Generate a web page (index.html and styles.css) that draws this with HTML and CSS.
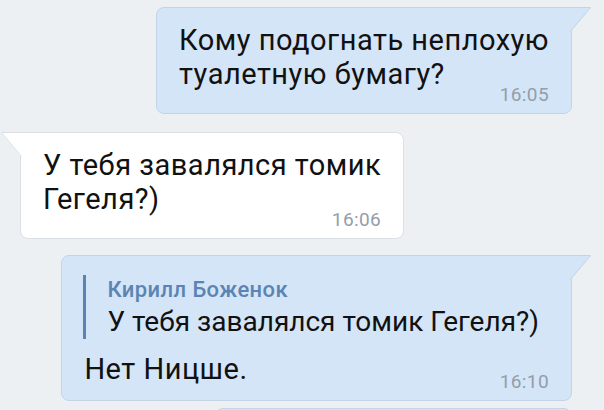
FILE: index.html
```html
<!DOCTYPE html>
<html lang="ru">
  <head>
    <meta charset="UTF-8" />
    <meta name="viewport" content="width=device-width, initial-scale=1.0" />
    <title>Диалог</title>
    <link rel="stylesheet" href="styles.css">
  </head>
  <body>
    <div class="chat">
      <div class="msg out">
        <svg class="tail" viewBox="0 0 22 26">
          <path class="tail-fill" d="M0 0 H21 L1 24.5 V26 H0 Z" />
          <path class="tail-line" d="M0 0.5 H20.5 L0.5 24.5" />
        </svg>
        <p class="text">Кому подогнать неплохую<br>туалетную бумагу?</p>
        <span class="time">16:05</span>
      </div>

      <div class="msg in">
        <svg class="tail" viewBox="0 0 22 26">
          <path class="tail-fill" d="M22 0 H1 L21 24.5 V26 H22 Z" />
          <path class="tail-line" d="M22 0.5 H1.5 L21.5 24.5" />
        </svg>
        <p class="text">У тебя завалялся томик<br>Гегеля?)</p>
        <span class="time">16:06</span>
      </div>

      <div class="msg out with-reply">
        <svg class="tail" viewBox="0 0 22 26">
          <path class="tail-fill" d="M0 0 H21 L1 24.5 V26 H0 Z" />
          <path class="tail-line" d="M0 0.5 H20.5 L0.5 24.5" />
        </svg>
        <div class="reply">
          <div class="reply-name">Кирилл Боженок</div>
          <div class="reply-text">У тебя завалялся томик Гегеля?)</div>
        </div>
        <p class="text">Нет Ницше.</p>
        <span class="time">16:10</span>
      </div>

      <div class="msg out next">
        <p class="text">&nbsp;</p>
      </div>
    </div>
  </body>
</html>
```

FILE: styles.css
```css
body {
  margin: 0;
  height: 410px;
  overflow: hidden;
  background-color: #edf0f3;
  font-family: Roboto, "Noto Sans", sans-serif;
  color: #111;
}
.chat {
  display: flex;
  flex-direction: column;
  padding: 7px 32px 0 20px;
}
.msg {
  position: relative;
  box-sizing: border-box;
  padding: 15px 22px 8px 22px;
  border: 1px solid #dbe0e6;
  border-radius: 8px;
  background-color: #fff;
}
.msg.out {
  align-self: flex-end;
  background-color: #d4e5f7;
  border-color: #c3d4e6;
  border-top-right-radius: 0;
}
.msg.in {
  align-self: flex-start;
  margin-top: 18px;
  border-top-left-radius: 0;
}
.msg.in + .msg.out {
  margin-top: 16px;
}
.msg.next {
  margin-top: 7px;
  width: 357px;
  border-top-right-radius: 8px;
}
.tail {
  position: absolute;
  top: -1px;
  width: 22px;
  height: 26px;
}
.out .tail {
  left: 100%;
  margin-left: -1px;
}
.in .tail {
  right: 100%;
  margin-right: -1px;
}
.out .tail-fill {
  fill: #d4e5f7;
}
.in .tail-fill {
  fill: #fff;
}
.tail-line {
  fill: none;
  stroke: #c3d4e6;
  stroke-width: 1;
}
.in .tail-line {
  stroke: #dbe0e6;
}
.text {
  margin: 0;
  font-size: 29px;
  letter-spacing: 0.5px;
  line-height: 34px;
  white-space: nowrap;
}
.time {
  display: block;
  margin-top: -6px;
  text-align: right;
  font-size: 19px;
  letter-spacing: 0.4px;
  line-height: 20px;
  color: #939ea9;
}
.with-reply .time {
  margin-top: -14px;
}
.reply {
  margin: 4px 0 13px -1px;
  padding: 0 10px 0 21px;
  border-left: 3px solid #5b84b2;
}
.reply-name {
  font-size: 22px;
  font-weight: 500;
  letter-spacing: 0.4px;
  line-height: 30px;
  color: #5b84b2;
}
.reply-text {
  font-size: 28px;
  line-height: 34px;
  white-space: nowrap;
}
```
